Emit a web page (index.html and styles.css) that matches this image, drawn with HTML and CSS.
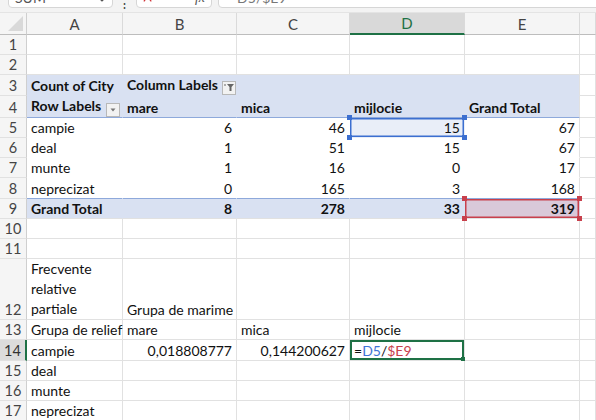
FILE: index.html
```html
<!DOCTYPE html>
<html>
  <head>
    <meta name="viewport" content="width=device-width, initial-scale=1">
    <link rel="stylesheet" href="styles.css">
  </head>
  <body>
    <div class="strip">
      <div class="namebox">
        <span class="name">SUM</span>
        <svg class="chev" width="8" height="6" viewBox="0 0 8 6"><path d="M1 1 L4 4 L7 1" fill="none" stroke="#555" stroke-width="1.2"/></svg>
      </div>
      <div class="dots">&#8942;</div>
      <div class="fxbox">
        <svg width="12" height="10" viewBox="0 0 12 10"><path d="M1 -4 L10 8 M10 -4 L1 8" stroke="#d13438" stroke-width="1.5"/></svg>
        <svg width="12" height="10" viewBox="0 0 12 10"><path d="M1 0 L5 5 L11 -4" fill="none" stroke="#2e8b3e" stroke-width="1.5"/></svg>
        <span class="fx">fx</span>
      </div>
      <div class="formula">=D5/$E9</div>
    </div>

    <table class="sheet">
      <colgroup>
        <col class="c-rh"><col class="c-a"><col class="c-b"><col class="c-c"><col class="c-d"><col class="c-e"><col>
      </colgroup>
      <thead>
        <tr>
          <th class="corner"><span class="tri"></span></th>
          <th>A</th><th>B</th><th>C</th><th class="hl-col">D</th><th>E</th><th></th>
        </tr>
      </thead>
      <tbody>
        <tr><th>1</th><td></td><td></td><td></td><td></td><td></td><td></td></tr>
        <tr><th>2</th><td></td><td></td><td></td><td></td><td></td><td></td></tr>
        <tr class="pv-head">
          <th>3</th>
          <td class="b">Count of City</td>
          <td class="b" colspan="2">Column Labels <span class="drop"><svg width="10" height="9" viewBox="0 0 10 9"><path d="M3 1 H10 L7.5 4 V8 H5.5 V4 Z" fill="#666"/><path d="M0 2 H2" stroke="#666"/></svg></span></td>
          <td></td><td class="pv-end"></td><td></td>
        </tr>
        <tr class="pv-head pv-line">
          <th>4</th>
          <td class="b">Row Labels <span class="drop"><svg width="8" height="6" viewBox="0 0 8 6"><path d="M1.5 1.5 H6.5 L4 4.5 Z" fill="#777"/></svg></span></td>
          <td class="b">mare</td><td class="b">mica</td><td class="b">mijlocie</td><td class="b pv-end">Grand Total</td><td></td>
        </tr>
        <tr class="pv-row">
          <th>5</th><td>campie</td><td class="n">6</td><td class="n">46</td><td class="n sel-blue">15<i class="h h-tl"></i><i class="h h-tr"></i><i class="h h-bl"></i><i class="h h-br"></i></td><td class="n pv-end">67</td><td></td>
        </tr>
        <tr class="pv-row">
          <th>6</th><td>deal</td><td class="n">1</td><td class="n">51</td><td class="n">15</td><td class="n pv-end">67</td><td></td>
        </tr>
        <tr class="pv-row">
          <th>7</th><td>munte</td><td class="n">1</td><td class="n">16</td><td class="n">0</td><td class="n pv-end">17</td><td></td>
        </tr>
        <tr class="pv-row pv-last">
          <th>8</th><td>neprecizat</td><td class="n">0</td><td class="n">165</td><td class="n">3</td><td class="n pv-end">168</td><td></td>
        </tr>
        <tr class="pv-total">
          <th>9</th><td class="b">Grand Total</td><td class="n b">8</td><td class="n b">278</td><td class="n b">33</td><td class="n b sel-red">319<i class="h h-tl"></i><i class="h h-tr"></i><i class="h h-bl"></i><i class="h h-br"></i></td><td></td>
        </tr>
        <tr><th>10</th><td></td><td></td><td></td><td></td><td></td><td></td></tr>
        <tr><th>11</th><td></td><td></td><td></td><td></td><td></td><td></td></tr>
        <tr class="tall">
          <th>12</th><td class="wrap">Frecvente relative partiale</td><td>Grupa de marime</td><td></td><td></td><td></td><td></td>
        </tr>
        <tr><th>13</th><td>Grupa de relief</td><td>mare</td><td>mica</td><td>mijlocie</td><td></td><td></td></tr>
        <tr>
          <th class="hl-row">14</th><td>campie</td><td class="n">0,018808777</td><td class="n">0,144200627</td>
          <td class="editing">=<span class="ref-blue">D5</span>/<span class="ref-red">$E9</span><i class="h h-br g"></i></td><td></td><td></td>
        </tr>
        <tr><th>15</th><td>deal</td><td></td><td></td><td></td><td></td><td></td></tr>
        <tr><th>16</th><td>munte</td><td></td><td></td><td></td><td></td><td></td></tr>
        <tr><th>17</th><td>neprecizat</td><td></td><td></td><td></td><td></td><td></td></tr>
      </tbody>
    </table>
  </body>
</html>
```

FILE: styles.css
```css
body {
  margin: 0;
  background: #fff;
  font-family: Lato, "Open Sans", sans-serif;
  font-size: 14px;
  color: #111;
  overflow: hidden;
}

/* formula bar, only its lower edge is visible */
.strip {
  display: flex;
  align-items: flex-end;
  height: 13px;
  background: #f3f3f3;
  overflow: hidden;
  border-bottom: 1px solid #e4e4e4;
  box-sizing: border-box;
}

.namebox,
.fxbox,
.formula {
  display: flex;
  align-items: flex-end;
  height: 22px;
  margin-bottom: 4px;
  background: #fff;
  border: 1px solid #d6d6d6;
  border-radius: 4px;
  box-sizing: border-box;
  padding: 0 6px 1px 6px;
  color: #555;
}

.namebox {
  margin-left: 8px;
  width: 105px;
  justify-content: space-between;
}

.chev {
  margin-bottom: 3px;
}

.dots {
  width: 23px;
  text-align: center;
  color: #444;
  font-size: 13px;
  line-height: 10px;
}

.fxbox {
  width: 76px;
  gap: 14px;
  padding-left: 6px;
}

.fxbox svg {
  margin-bottom: 2px;
}

.fx {
  font-family: "Liberation Serif", serif;
  font-style: italic;
  margin-left: 4px;
}

.formula {
  flex: 1;
  margin-left: 6px;
  margin-right: -6px;
  padding-left: 10px;
  color: #777;
}

/* grid */
.sheet {
  table-layout: fixed;
  width: 596px;
  border-collapse: separate;
  border-spacing: 0;
}

.c-rh { width: 27px; }
.c-a { width: 96px; }
.c-b { width: 114px; }
.c-c { width: 113px; }
.c-d { width: 115px; }
.c-e { width: 115px; }

thead th {
  height: 22px;
  padding: 0;
  background: #f5f5f5;
  border-right: 1px solid #dadada;
  border-bottom: 1px solid #bdbdbd;
  font-weight: normal;
  color: #444;
  font-size: 15px;
  box-sizing: border-box;
}

thead th.corner {
  position: relative;
  border-right-color: #cfcfcf;
}

.tri {
  position: absolute;
  right: 3px;
  bottom: 3px;
  width: 0;
  height: 0;
  border-left: 15px solid transparent;
  border-bottom: 15px solid #d9d9d9;
}

thead th.hl-col {
  background: #d9d9d9;
  color: #1e7145;
  border-bottom: 2px solid #1e7145;
}

tbody th {
  height: 20.2px;
  padding: 0;
  background: #f5f5f5;
  border-right: 1px solid #cfcfcf;
  border-bottom: 1px solid #e1e1e1;
  font-weight: normal;
  color: #444;
  font-size: 14.5px;
  line-height: 19px;
  text-align: center;
  vertical-align: bottom;
  box-sizing: border-box;
}

tbody th.hl-row {
  background: #dcdcdc;
  border-right: 2px solid #1e7145;
  color: #333;
}

td {
  height: 20.2px;
  padding: 0 4px 0 4px;
  border-right: 1px solid #e1e1e1;
  border-bottom: 1px solid #e1e1e1;
  white-space: nowrap;
  overflow: visible;
  vertical-align: bottom;
  line-height: 19px;
  position: relative;
  box-sizing: border-box;
}

td.n {
  text-align: right;
}

td.b {
  font-weight: bold;
}

/* pivot table */
.pv-head td,
.pv-total td {
  background: #d9e1f2;
}

.pv-head td:not(:last-child),
.pv-row td:not(:last-child),
.pv-total td:not(:last-child) {
  border-right-color: transparent;
}

.pv-head td.pv-end,
.pv-row td.pv-end,
.pv-total td.pv-end {
  border-right-color: #e1e1e1;
}

.pv-head td:last-child,
.pv-total td:last-child {
  background: #fff;
}

.pv-head:not(.pv-line) td:not(:last-child) {
  border-bottom-color: transparent;
}

.pv-line td:not(:last-child),
.pv-last td:not(:last-child) {
  border-bottom-color: #8ea9db;
}

.pv-row:not(.pv-last) td:not(:last-child) {
  border-bottom-color: transparent;
}

.drop {
  display: inline-flex;
  align-items: center;
  justify-content: center;
  width: 14px;
  height: 14px;
  margin-left: 1px;
  vertical-align: -2px;
  background: #f2f2f2;
  border: 1px solid #b8b8b8;
  box-sizing: border-box;
  line-height: 0;
}

/* selections */
.h {
  position: absolute;
  width: 5px;
  height: 5px;
  z-index: 2;
}

.h-tl { left: -3px; top: -3px; }
.h-tr { right: -3px; top: -3px; }
.h-bl { left: -3px; bottom: -3px; }
.h-br { right: -3px; bottom: -3px; }

td.sel-blue {
  background: #e9eef8;
  box-shadow: inset 0 0 0 1.5px #3c6fd0;
}

.sel-blue .h {
  background: #3c6fd0;
}

td.sel-red {
  background: #d9c9d9;
  box-shadow: inset 0 0 0 1.5px #c8404c;
}

.sel-red .h {
  background: #c8404c;
}

td.editing {
  box-shadow: inset 0 0 0 2px #1e7145;
}

.editing .h {
  width: 4px;
  height: 4px;
  right: -1px;
  bottom: -1px;
  background: #1e7145;
}

.ref-blue {
  color: #3f74d6;
}

.ref-red {
  color: #c8404c;
}

tr.tall td,
tr.tall th {
  height: 60.5px;
  vertical-align: bottom;
}

td.wrap {
  white-space: normal;
  line-height: 20px;
}
```
